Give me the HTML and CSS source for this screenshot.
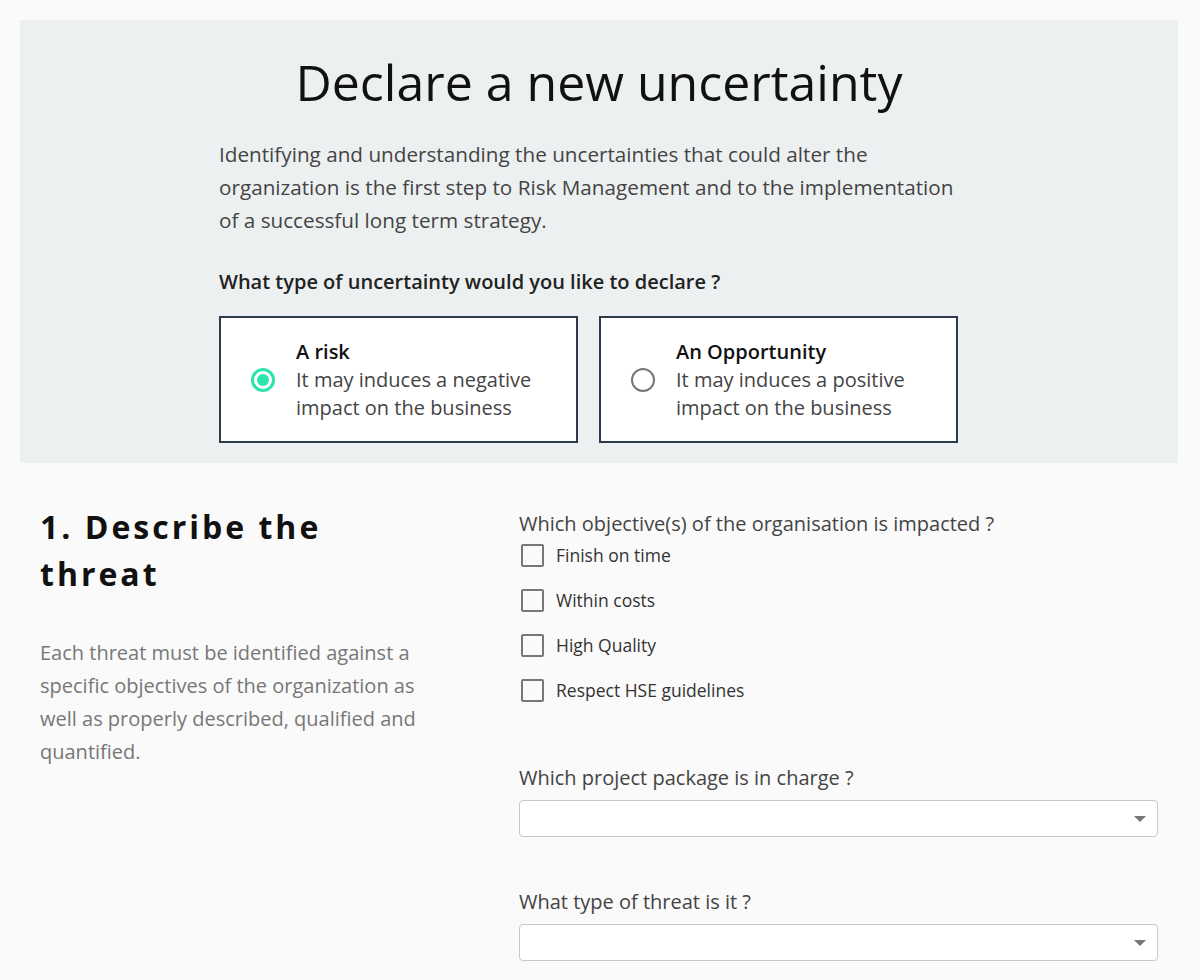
FILE: index.html
```html
<!DOCTYPE html>
<html lang="en">
<head>
    <meta charset="UTF-8">
    <meta name="viewport" content="width=device-width, initial-scale=1.0">
    <title>Declare a new uncertainty</title>
    <link rel="stylesheet" href="styles.css">
</head>
<body>

<div class="intro">
  <h1>Declare a new uncertainty</h1>
  <div class="intro-body">
    <p class="lead">Identifying and understanding the uncertainties that could alter the organization is the first step to Risk Management and to the implementation of a successful long term strategy.</p>
    <h3>What type of uncertainty would you like to declare ?</h3>
    <div class="choices">
      <label class="choice">
        <span class="radio checked"></span>
        <span class="choice-text">
          <strong>A risk</strong>
          It may induces a negative impact on the business
        </span>
      </label>
      <label class="choice">
        <span class="radio"></span>
        <span class="choice-text">
          <strong>An Opportunity</strong>
          It may induces a positive impact on the business
        </span>
      </label>
    </div>
  </div>
</div>

<div class="section">
  <div class="section-info">
    <h2>1. Describe the threat</h2>
    <p>Each threat must be identified against a specific objectives of the organization as well as properly described, qualified and quantified.</p>
  </div>

  <div class="section-form">
    <div class="field field-checks">
      <div class="field-label">Which objective(s) of the organisation is impacted ?</div>
      <div class="checks">
        <label class="check"><span class="box"></span>Finish on time</label>
        <label class="check"><span class="box"></span>Within costs</label>
        <label class="check"><span class="box"></span>High Quality</label>
        <label class="check"><span class="box"></span>Respect HSE guidelines</label>
      </div>
    </div>

    <div class="field">
      <div class="field-label">Which project package is in charge ?</div>
      <div class="select"><span class="caret"></span></div>
    </div>

    <div class="field">
      <div class="field-label">What type of threat is it ?</div>
      <div class="select"><span class="caret"></span></div>
    </div>
  </div>
</div>

</body>
</html>
```

FILE: styles.css
```css
body {
  font-family: 'Open Sans', 'Noto Sans', sans-serif;
  background: #fafafa;
  color: #333;
  margin: 0;
}

.intro {
  margin: 20px 22px 0 20px;
  background: #edf0f1;
  padding: 32px 0 20px;
}

.intro h1 {
  margin: 0;
  text-align: center;
  font-size: 50px;
  font-weight: 400;
  line-height: 60px;
  color: #111;
}

.intro-body {
  width: 760px;
  margin: 0 auto;
}

.lead {
  max-width: 745px;
  margin: 26px 0 0;
  font-size: 20.7px;
  line-height: 33px;
  color: #444;
}

.intro h3 {
  margin: 31px 0 0;
  font-size: 20px;
  font-weight: 600;
  line-height: 28px;
  color: #222;
}

.choices {
  display: flex;
  gap: 21px;
  margin-top: 20px;
}

.choice {
  width: 359px;
  height: 127px;
  box-sizing: border-box;
  background: white;
  border: 2px solid #2c3a4b;
  display: flex;
  align-items: center;
  padding-left: 30px;
}

.radio {
  flex: none;
  width: 24px;
  height: 24px;
  box-sizing: border-box;
  border-radius: 50%;
  border: 2.5px solid #777;
  margin-right: 21px;
  position: relative;
}

.radio.checked {
  border: 3px solid #2ee3ae;
}

.radio.checked::after {
  content: '';
  position: absolute;
  left: 3px;
  top: 3px;
  width: 12px;
  height: 12px;
  border-radius: 50%;
  background: #2ee3ae;
}

.choice-text {
  font-size: 20px;
  line-height: 28px;
  color: #444;
  padding-right: 20px;
}

.choice-text strong {
  display: block;
  font-weight: 600;
  color: #111;
}

.section {
  display: flex;
  padding: 40px 42px 0 40px;
}

.section-info {
  width: 385px;
  margin-right: 94px;
}

.section-info h2 {
  margin: 0;
  font-size: 32px;
  font-weight: 700;
  line-height: 47px;
  letter-spacing: 3px;
  color: #111;
}

.section-info p {
  margin: 39px 0 0;
  font-size: 20px;
  line-height: 33px;
  color: #777;
}

.section-form {
  flex: 1;
}

.field {
  margin-bottom: 51px;
}

.field-checks {
  margin-bottom: 62px;
}

.field-label {
  font-size: 20px;
  line-height: 28px;
  color: #444;
  margin-top: 5px;
  margin-bottom: 8px;
}

.field-checks .field-label {
  margin-top: 7px;
}

.checks {
  margin-top: -3px;
}

.check {
  display: flex;
  align-items: center;
  height: 24px;
  margin-bottom: 21px;
  font-size: 17.5px;
  color: #333;
}

.check:last-child {
  margin-bottom: 0;
}

.box {
  width: 23px;
  height: 23px;
  box-sizing: border-box;
  border: 2.5px solid #777;
  border-radius: 2px;
  margin: 0 12px 0 2px;
}

.select {
  height: 37px;
  box-sizing: border-box;
  background: white;
  border: 1px solid #c8c8c8;
  border-radius: 4px;
  position: relative;
}

.caret {
  position: absolute;
  right: 11px;
  top: 15px;
  border-left: 6px solid transparent;
  border-right: 6px solid transparent;
  border-top: 6px solid #777;
}
```
